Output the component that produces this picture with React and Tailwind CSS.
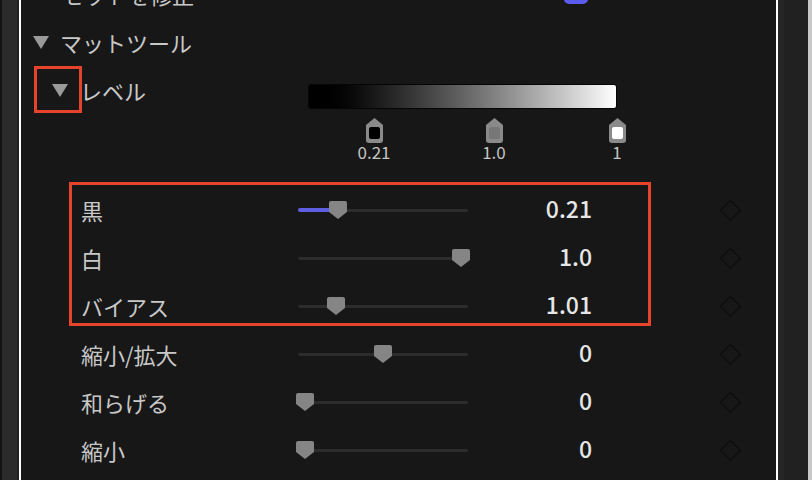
import React from 'react';

const rows = [
  { label: '黒', value: '0.21', pos: 40, fill: true },
  { label: '白', value: '1.0', pos: 163 },
  { label: 'バイアス', value: '1.01', pos: 38 },
  { label: '縮小/拡大', value: '0', pos: 85 },
  { label: '和らげる', value: '0', pos: 7 },
  { label: '縮小', value: '0', pos: 7 },
];

const markers = [
  { at: 66, label: '0.21', swatch: 'bg-black' },
  { at: 186, label: '1.0', swatch: 'bg-[#777777]' },
  { at: 309, label: '1', swatch: 'bg-white' },
];

function Caret() {
  return (
    <svg width="16" height="13" viewBox="0 0 16 13">
      <path d="M0 0 H16 L8 13 Z" fill="#9a9a9a" />
    </svg>
  );
}

function Thumb({ left }) {
  return (
    <svg
      className="absolute top-[-8px]"
      style={{ left: left - 9 }}
      width="18"
      height="18"
      viewBox="0 0 18 18"
    >
      <path d="M2 0 H16 Q18 0 18 2 V11 L9 18 L0 11 V2 Q0 0 2 0 Z" fill="#858585" />
    </svg>
  );
}

function Marker({ at, label, swatch }) {
  return (
    <div className="absolute top-0 flex flex-col items-center" style={{ left: at - 20, width: 40 }}>
      <div className="relative h-[25px] w-[17px]">
        <svg className="absolute left-0 top-0" width="17" height="25" viewBox="0 0 17 25">
          <path d="M8.5 0 L17 7 V22 Q17 25 14 25 H3 Q0 25 0 22 V7 Z" fill="#8a8a8a" />
        </svg>
        <div className={`absolute left-[3px] top-[9px] h-[12px] w-[11px] rounded-[2px] ${swatch}`} />
      </div>
      <div className="text-[17px] leading-[17px] text-[#c4c4c4]">{label}</div>
    </div>
  );
}

function SliderRow({ label, value, pos, fill }) {
  return (
    <div className="flex h-[48px] items-center">
      <div className="w-[277px] pl-[60px] text-[22px] text-[#c8c8c8]">{label}</div>
      <div className="relative h-[3px] w-[170px] rounded-full bg-[#2c2c2c]">
        {fill && (
          <div className="absolute left-0 top-[-0.5px] h-[4px] rounded-full bg-[#5d5de2]" style={{ width: pos }} />
        )}
        <Thumb left={pos} />
      </div>
      <div className="w-[124px] pb-[3px] text-right text-[23px] font-medium text-[#e6e6e6]">{value}</div>
      <div className="ml-[131px] h-[15px] w-[15px] rotate-45 border-[1.5px] border-[#0b0b0b]" />
    </div>
  );
}

export default function App() {
  return (
    <div className="flex h-[480px] w-[812px] overflow-hidden bg-[#171717] font-['Noto_Sans_CJK_JP',sans-serif] leading-none">
      <div className="w-[2px] bg-[#131313]" />
      <div className="w-[15px] bg-[#2b2b2b]" />
      <div className="w-[2px] bg-[#202020]" />
      <div className="w-[2px] bg-white" />

      <div className="relative w-[755px] bg-[#171717]">
        <div className="mt-[-30px] flex h-[48px] items-center">
          <div className="w-[543px] pl-[41px] text-[22px] text-[#c8c8c8]">セットを修正</div>
          <div className="mt-[-2px] h-[22px] w-[24px] rounded-[5px] bg-[#5a5cec]" />
        </div>

        <div className="flex h-[48px] items-center">
          <div className="pl-[12px]"><Caret /></div>
          <div className="pl-[11px] text-[22px] text-[#c8c8c8]">マットツール</div>
        </div>

        <div className="flex h-[48px] items-center">
          <div className="w-[47px] pl-[31px]"><Caret /></div>
          <div className="w-[240px] pl-[12px] text-[22px] text-[#c8c8c8]">レベル</div>
          <div className="mt-[13px] h-[25px] w-[309px] rounded-[3px] border border-[#050505] bg-gradient-to-r from-black to-white" />
        </div>

        <div className="ml-[287px] h-[72px] w-[309px] pt-[4px]">
          <div className="relative">
            {markers.map(m => (
              <Marker key={m.label} {...m} />
            ))}
          </div>
        </div>

        {rows.map(r => (
          <SliderRow key={r.label} {...r} />
        ))}

        <div className="absolute left-[13px] top-[66px] h-[47px] w-[48px] border-[3px] border-[#e5432b]" />
        <div className="absolute left-[48px] top-[182px] h-[144px] w-[582px] border-[3px] border-[#e5432b]" />
      </div>

      <div className="w-[2px] bg-white" />
      <div className="w-[6px] bg-[#262626]" />
      <div className="w-[24px] bg-[#212121]" />
      <div className="w-[4px] bg-[#c8c8c8]" />
    </div>
  );
}
